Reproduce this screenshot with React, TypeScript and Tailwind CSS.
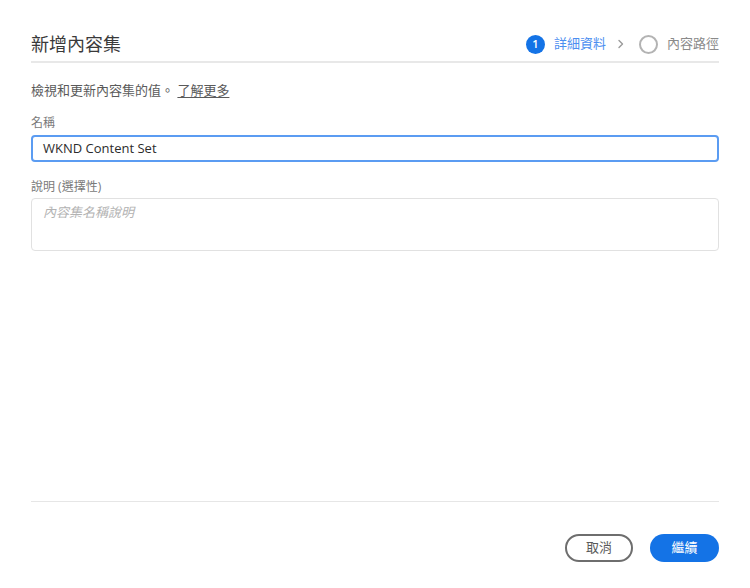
import React, { FC } from "react";

const SANS = "font-['Open_Sans','Noto_Sans_CJK_TC',sans-serif]";

const Stepper: FC = () => {
  return (
    <div className="flex items-center text-[13px]">
      <span className="flex h-[19px] w-[19px] items-center justify-center rounded-full bg-[#1473e6] text-[11px] font-semibold text-white">
        1
      </span>
      <span className="ml-[9px] text-[#4b8ef0]">詳細資料</span>
      <svg className="ml-[11px] h-[10px] w-[8px]" viewBox="0 0 8 10" fill="none">
        <path d="M2 1.5 L5.5 5 L2 8.5" stroke="#9a9a9a" strokeWidth="1.4" strokeLinecap="round" strokeLinejoin="round" />
      </svg>
      <span className="ml-[14px] h-[19px] w-[19px] rounded-full border-2 border-[#b3b3b3]" />
      <span className="ml-[9px] text-[#8a8a8a]">內容路徑</span>
    </div>
  );
};

export default function App() {
  return (
    <div className={`flex h-[588px] w-[750px] flex-col bg-white px-[31px] ${SANS}`}>
      <div className="flex items-center justify-between border-b-2 border-[#e8e8e8] pt-[31px] pb-[4px]">
        <h1 className="text-[18px] leading-[26px] text-[#3a3a3a]">新增內容集</h1>
        <Stepper />
      </div>

      <p className="mt-[17px] text-[13px] leading-[20px] text-[#5a5a5a]">
        檢視和更新內容集的值。{" "}
        <a className="text-[#5a5a5a] underline underline-offset-2">了解更多</a>
      </p>

      <label className="mt-[15px] text-[12px] leading-[16px] text-[#7a7a7a]">名稱</label>
      <div className="mt-[4px] flex h-[27px] items-center rounded-[4px] border-2 border-[#5b9cf2] px-[10px] text-[13px] text-[#2c2c2c]">
        WKND Content Set
      </div>

      <label className="mt-[17px] text-[12px] leading-[16px] text-[#7a7a7a]">說明 (選擇性)</label>
      <div className="mt-[3px] h-[53px] rounded-[4px] border border-[#e1e1e1] px-[11px] pt-[4px] text-[13px] italic text-[#b3b3b3]">
        內容集名稱說明
      </div>

      <div className="flex-1" />

      <div className="border-t border-[#e6e6e6]" />
      <div className="flex justify-end gap-[17px] pt-[32px] pb-[26px]">
        <button className="flex h-[28px] w-[68px] items-center justify-center rounded-full border-2 border-[#6e6e6e] text-[13px] text-[#5a5a5a]">
          取消
        </button>
        <button className="flex h-[28px] w-[69px] items-center justify-center rounded-full bg-[#1473e6] text-[13px] text-white">
          繼續
        </button>
      </div>
    </div>
  );
}
